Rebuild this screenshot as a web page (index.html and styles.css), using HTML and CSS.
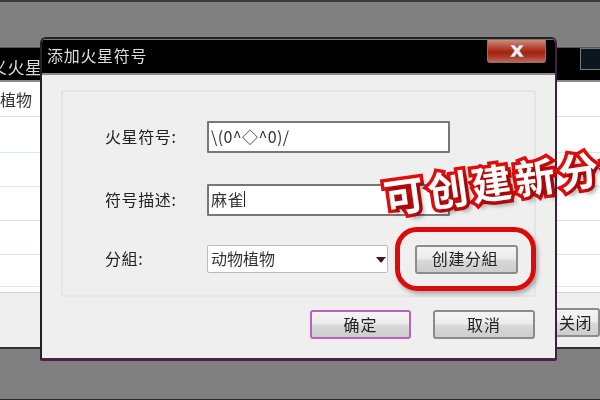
FILE: index.html
```html
<!DOCTYPE html>
<html lang="zh">
<head>
<meta charset="utf-8">
<title>添加火星符号</title>
<link rel="stylesheet" href="styles.css">
</head>
<body>
<main class="desktop">
  <section class="window back">
    <header class="back-title">
      <span class="back-name">义火星</span>
      <span class="back-max"></span>
    </header>
    <div class="back-table">
      <div class="back-row back-head"><span>植物</span></div>
      <div class="back-row tall"></div>
      <div class="back-row"></div>
      <div class="back-row"></div>
      <div class="back-row"></div>
      <div class="back-row last"></div>
    </div>
    <footer class="back-foot"><span class="btn back-close">关闭</span></footer>
  </section>

  <section class="window dialog">
    <header class="title">
      <span class="title-text">添加火星符号</span>
      <span class="close"><svg width="16" height="14" viewBox="0 0 16 14"><path d="M1 1h4.5L8 4.2 10.500 1H15l-4.500 5.800L15 13h-4.500L8 9.600 5.500 13H1l4.500-6.200z" fill="#f0f0f0" stroke="#777" stroke-width=".5"/></svg></span>
    </header>
    <div class="client">
      <div class="group">
        <div class="row r1">
          <span class="label">火星符号:</span>
          <span class="input">\(0^◇^0)/</span>
        </div>
        <div class="row r2">
          <span class="label">符号描述:</span>
          <span class="input">麻雀<i class="caret"></i></span>
        </div>
        <div class="row r3">
          <span class="label">分組:</span>
          <span class="select">动物植物<i class="arrow"></i></span>
          <span class="btn create">创建分組</span>
        </div>
      </div>
      <div class="actions">
        <span class="btn ok">确定</span>
        <span class="btn cancel">取消</span>
      </div>
    </div>
  </section>

  <div class="ring"></div>
  <div class="callout">可创建新分組</div>
</main>
</body>
</html>
```

FILE: styles.css
```css
* { box-sizing: border-box; }
html, body { margin: 0; padding: 0; }
body { width: 600px; height: 400px; overflow: hidden; background: #808080; }
.desktop {
  position: relative; width: 600px; height: 400px; overflow: hidden;
  background: #808080; border-top: 2px solid #3a3a3a; border-bottom: 1px solid #2c2c2c;
  font: 16px/1 "Noto Sans CJK SC", "Noto Sans", sans-serif; color: #222;
  filter: blur(.35px);
}
.window { position: absolute; }

.back { left: -20px; top: 45px; width: 640px; height: 302px; background: #efefef; display: flex; flex-direction: column; border-bottom: 2px solid #333; }
.back-title { height: 35px; background: #000; border-top: 1px solid #555; border-bottom: 2px solid #8a8a8a; display: flex; justify-content: space-between; color: #ddd; }
.back-name { padding: 10px 0 0 10px; font-size: 17px; letter-spacing: .5px; }
.back-max { width: 40px; height: 22px; background: #0c1620; border: 1px solid #777; }
.back-table { background: #fff; display: flex; flex-direction: column; height: 211px; flex: none; }
.back-row { height: 34px; flex: none; border-bottom: 1px solid #dfe4ea; padding: 9px 0 0 20px; font-size: 16px; color: #333; }
.back-head { height: 35px; border-bottom-color: #e0e0e0; }
.tall { height: 36px; }
.back-row.last { height: 38px; border-bottom: 1px solid #d0d0d0; box-shadow: inset 0 -5px 0 #fff, inset 0 -6px 0 #e4e8ec; }
.back-foot { flex: 1; display: flex; justify-content: flex-end; padding: 15px 20px 0 0; }

.dialog { left: 40px; top: 35px; width: 517px; height: 324px; background: #efefef; border: 2px solid #222; border-right-color: #3d2140; border-bottom: 3px solid #4b2346; border-radius: 6px 6px 2px 2px; display: flex; flex-direction: column; overflow: hidden; }
.title { height: 36px; flex: none; background: #000; border-top: 1px solid #777; border-bottom: 2px solid #8a8a8a; position: relative; color: #ddd; padding: 7px 0 0 5px; }
.title-text { font-size: 16px; letter-spacing: .7px; }
.close { position: absolute; top: 0; right: 9px; width: 59px; height: 23px; display: flex; align-items: center; justify-content: center; border: 1px solid #9b6a60; border-top: 0; border-radius: 0 0 3px 3px; background: linear-gradient(#d08a7c, #b9503e 30%, #a82010 55%, #a8392a 75%, #bb6a5c); }

.client { flex: 1; padding: 15px 19px 0 19px; display: flex; flex-direction: column; }
.group { height: 207px; flex: none; border: 2px solid #e2e5e8; border-radius: 3px; padding: 29px 0 0 42px; }
.row { display: flex; align-items: center; }
.r1 { height: 32px; margin-bottom: 31px; }
.r2 { height: 32px; margin-bottom: 28px; }
.r3 { height: 30px; }
.label { width: 102px; font-size: 16px; letter-spacing: .6px; color: #222; padding-bottom: 3px; }
.input { width: 243px; height: 32px; background: #fff; border: 2px solid #777; border-radius: 1px; padding: 0 2px 2px; display: flex; align-items: center; color: #333; font-size: 16px; letter-spacing: .4px; }
.caret { display: inline-block; width: 1px; height: 16px; background: #222; }
.select { width: 181px; height: 28px; background: #fff; border: 1px solid #bbb; border-radius: 2px; padding: 0 3px 2px; display: flex; align-items: center; position: relative; color: #333; margin-top: -1px; }
.arrow { position: absolute; left: 168px; top: 11px; border: 5px solid transparent; border-top: 6px solid #4a1030; border-bottom: 0; }

.btn { display: flex; align-items: center; justify-content: center; background: linear-gradient(#f4f4f4 0, #ececec 45%, #d8d8d8 55%, #cdcdcd 100%); border: 2px solid #8c8c8c; border-radius: 3px; color: #222; font-size: 16px; padding-bottom: 2px; }
.btn.back-close { width: 60px; height: 29px; justify-content: flex-end; padding-right: 6px; letter-spacing: .5px; }
.create { width: 103px; height: 29px; margin-left: 27px; letter-spacing: .6px; padding-right: 3px; }
.actions { display: flex; justify-content: flex-end; gap: 22px; padding: 13px 1px 0 0; }
.ok { width: 101px; height: 29px; letter-spacing: 1px; border-color: #bb62bb; }
.cancel { width: 102px; height: 29px; letter-spacing: 1px; }

.ring { position: absolute; left: 395px; top: 225px; width: 141px; height: 64px; border: 5px solid #dc0b0b; border-radius: 22px; box-shadow: 2px 3px 4px rgba(0,0,0,.3); }
.callout {
  position: absolute; left: 384px; top: 175px; white-space: nowrap; transform: rotate(-8deg); transform-origin: left center;
  font-size: 40px; line-height: 1; font-weight: 700; color: #fff; letter-spacing: 4px;
  -webkit-text-stroke: 7px #e00d0d; paint-order: stroke fill; text-shadow: 4px 5px 4px rgba(0,0,0,.35);
}
```
